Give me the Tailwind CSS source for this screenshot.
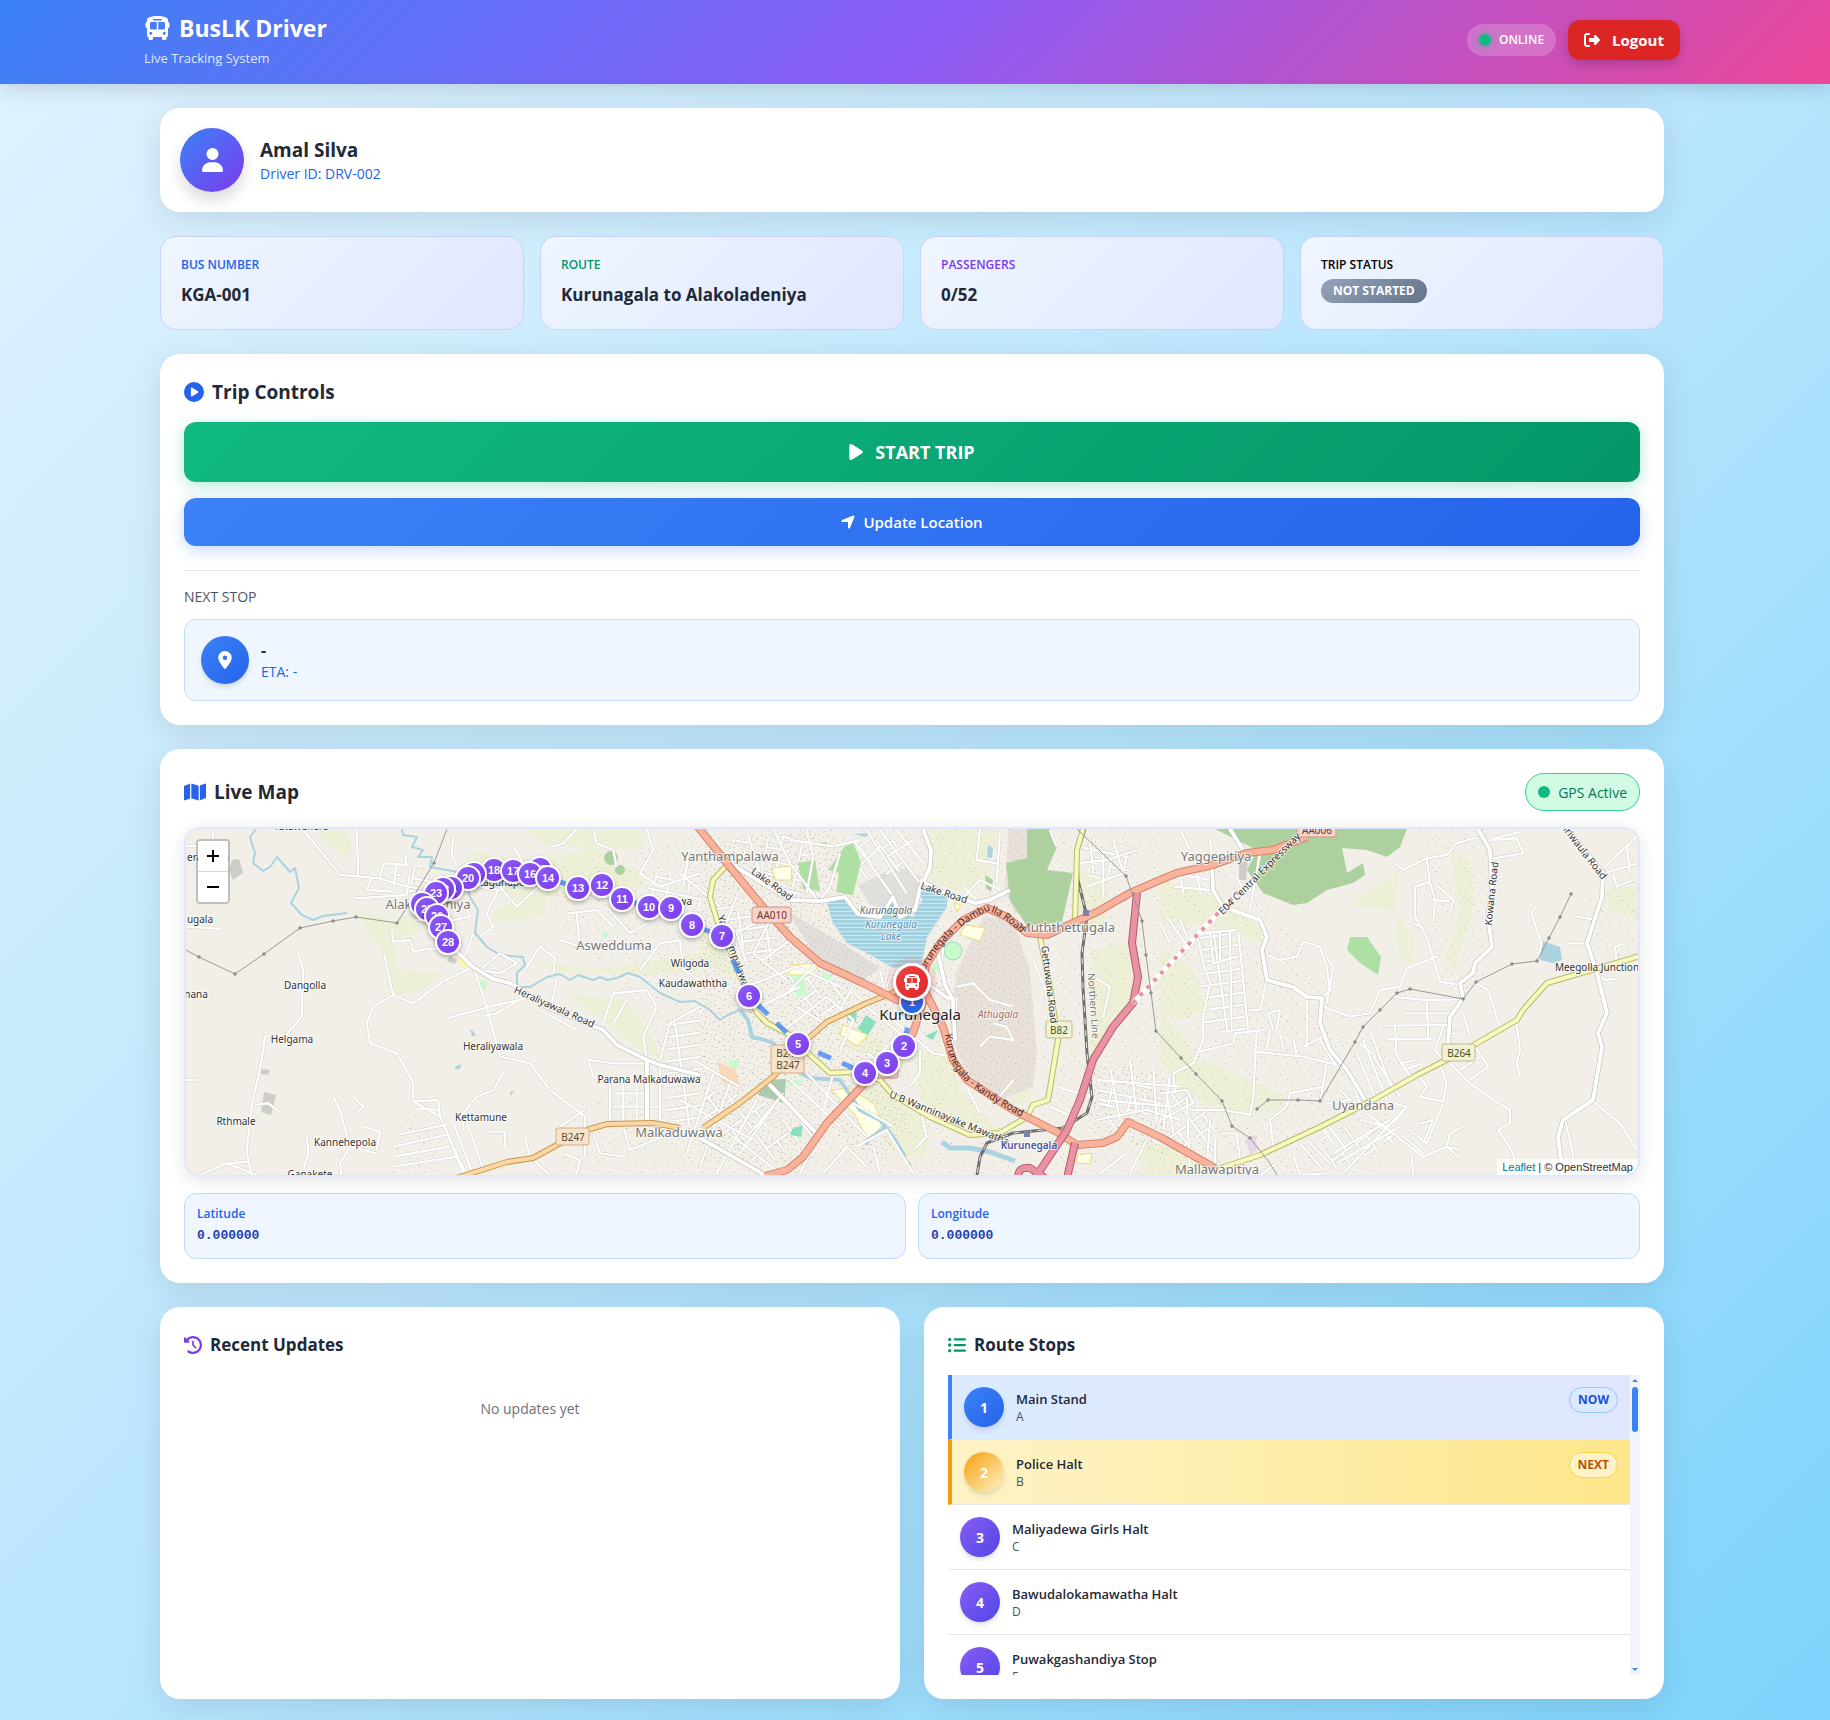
<!DOCTYPE html>
<html lang="en">
<head>
<meta charset="utf-8">
<meta name="viewport" content="width=device-width, initial-scale=1">
<title>BusLK Driver</title>
<script src="https://cdn.jsdelivr.net/npm/@tailwindcss/browser@4"></script>
</head>
<body class="min-h-screen bg-[linear-gradient(135deg,#e0f2fe_0%,#bae6fd_50%,#7dd3fc_100%)] font-['Open_Sans','Noto_Sans',sans-serif] text-[#1f2937]">

<svg width="0" height="0" class="absolute" aria-hidden="true">
  <symbol id="i-bus" viewBox="0 0 576 512"><path fill="currentColor" d="M288 0C422.4 0 512 35.2 512 80V96l0 32c17.700 0 32 14.300 32 32v64c0 17.700-14.300 32-32 32l0 160c0 17.700-14.300 32-32 32v32c0 17.700-14.300 32-32 32H416c-17.700 0-32-14.300-32-32V448H192v32c0 17.700-14.300 32-32 32H128c-17.700 0-32-14.300-32-32l0-32c-17.700 0-32-14.300-32-32l0-160c-17.700 0-32-14.300-32-32V160c0-17.700 14.300-32 32-32h0V96h0V80C64 35.200 153.600 0 288 0zM128 160v96c0 17.700 14.300 32 32 32H272V128H160c-17.700 0-32 14.300-32 32zM304 288H416c17.700 0 32-14.300 32-32V160c0-17.700-14.300-32-32-32H304V288zM144 400a32 32 0 1 0 0-64 32 32 0 1 0 0 64zm288 0a32 32 0 1 0 0-64 32 32 0 1 0 0 64zM384 80c0-8.800-7.200-16-16-16H208c-8.800 0-16 7.200-16 16s7.200 16 16 16H368c8.800 0 16-7.200 16-16z"/></symbol>
</svg>

<header class="bg-[linear-gradient(135deg,#3b82f6_0%,#8b5cf6_50%,#ec4899_100%)] pt-3 pr-1.5 pb-4 shadow-[0_4px_20px_rgba(0,0,0,0.15)]">
  <div class="mx-auto flex max-w-[1536px] items-center justify-between text-white">
    <div>
      <h1 class="flex h-8 items-center gap-2 text-[23px] font-bold leading-8">
        <svg class="h-6 w-[27px]" aria-hidden="true"><use href="#i-bus"/></svg>
        <span>BusLK Driver</span>
      </h1>
      <p class="mt-1 text-[13px] leading-5 text-blue-100">Live Tracking System</p>
    </div>
    <div class="flex items-center gap-3">
      <div class="flex h-8 items-center gap-2 rounded-full bg-white/20 px-3 text-[12px] font-semibold">
        <span class="size-3 rounded-full bg-[#10b981] shadow-[0_0_8px_rgba(16,185,129,0.6)]"></span>
        <span>ONLINE</span>
      </div>
      <button type="button" class="flex h-10 items-center gap-3 rounded-xl bg-[#dc2626] px-4 text-[15px] font-bold shadow-[0_4px_12px_rgba(0,0,0,0.2)]">
        <svg class="size-4" viewBox="0 0 512 512" fill="currentColor" aria-hidden="true"><path d="M377.900 105.900L500.700 228.700c7.200 7.200 11.300 17.100 11.300 27.300s-4.100 20.100-11.300 27.300L377.900 406.100c-6.400 6.400-15 9.900-24 9.900c-18.700 0-33.900-15.200-33.900-33.900l0-62.100-128 0c-17.700 0-32-14.300-32-32l0-64c0-17.700 14.300-32 32-32l128 0 0-62.100c0-18.700 15.200-33.900 33.900-33.900c9 0 17.600 3.600 24 9.900zM160 96L96 96c-17.700 0-32 14.300-32 32l0 256c0 17.700 14.300 32 32 32l64 0c17.700 0 32 14.300 32 32s-14.300 32-32 32l-64 0c-53 0-96-43-96-96L0 128C0 75 43 32 96 32l64 0c17.700 0 32 14.300 32 32s-14.300 32-32 32z"/></svg>
        <span>Logout</span>
      </button>
    </div>
  </div>
</header>

<div class="pr-1.5">
<main class="mx-auto flex max-w-[1536px] flex-col gap-6 px-4 pt-6 pb-5">

  <section class="flex items-center gap-4 rounded-[20px] bg-white p-5 shadow-[0_8px_32px_rgba(0,0,0,0.1)]">
    <div class="flex size-16 items-center justify-center rounded-full bg-[linear-gradient(135deg,#3b82f6,#7c3aed)] text-white shadow-[0_8px_16px_rgba(0,0,0,0.15)]">
      <svg class="h-6 w-[21px]" viewBox="0 0 448 512" fill="currentColor" aria-hidden="true"><path d="M224 256A128 128 0 1 0 224 0a128 128 0 1 0 0 256zm-45.700 48C79.800 304 0 383.800 0 482.300C0 498.700 13.300 512 29.700 512H418.300c16.400 0 29.700-13.300 29.700-29.700C448 383.800 368.200 304 269.700 304H178.300z"/></svg>
    </div>
    <div>
      <h2 class="text-[19px] font-bold leading-7">Amal Silva</h2>
      <p class="text-[14px] font-medium leading-5 text-[#2563eb]">Driver ID: DRV-002</p>
    </div>
  </section>

  <section class="grid grid-cols-4 gap-4">
    <div class="rounded-2xl border border-[#c7d2fe] bg-[linear-gradient(135deg,#eff6ff,#e0e7ff)] p-5">
      <p class="text-[12px] font-semibold leading-4 text-[#2563eb]">BUS NUMBER</p>
      <p class="mt-2 text-[17px] font-bold leading-7">KGA-001</p>
    </div>
    <div class="rounded-2xl border border-[#c7d2fe] bg-[linear-gradient(135deg,#eff6ff,#e0e7ff)] p-5">
      <p class="text-[12px] font-semibold leading-4 text-[#059669]">ROUTE</p>
      <p class="mt-2 text-[17px] font-bold leading-7">Kurunagala to Alakoladeniya</p>
    </div>
    <div class="rounded-2xl border border-[#c7d2fe] bg-[linear-gradient(135deg,#eff6ff,#e0e7ff)] p-5">
      <p class="text-[12px] font-semibold leading-4 text-[#7c3aed]">PASSENGERS</p>
      <p class="mt-2 text-[17px] font-bold leading-7">0/52</p>
    </div>
    <div class="rounded-2xl border border-[#c7d2fe] bg-[linear-gradient(135deg,#eff6ff,#e0e7ff)] p-5">
      <p class="text-[12px] font-semibold leading-4 text-black">TRIP STATUS</p>
      <p class="mt-1.5 flex"><span class="h-6 rounded-full bg-[linear-gradient(135deg,#94a3b8,#64748b)] px-3 text-[12px] font-bold leading-6 text-white">NOT STARTED</span></p>
    </div>
  </section>

  <section class="rounded-[20px] bg-white p-6 shadow-[0_8px_32px_rgba(0,0,0,0.1)]">
    <h2 class="mb-4 flex h-7 items-center gap-2 text-[19px] font-bold">
      <svg class="size-5 text-[#2563eb]" viewBox="0 0 512 512" fill="currentColor" aria-hidden="true"><path d="M0 256a256 256 0 1 1 512 0A256 256 0 1 1 0 256zM188.300 147.100c-7.600 4.200-12.300 12.300-12.300 20.900V344c0 8.700 4.700 16.700 12.300 20.900s16.800 4.100 24.300-.5l144-88c7.100-4.400 11.500-12.100 11.500-20.500s-4.400-16.100-11.500-20.500l-144-88c-7.400-4.500-16.700-4.700-24.300-.5z"/></svg>
      <span>Trip Controls</span>
    </h2>
    <div class="flex flex-col gap-4">
      <button type="button" class="flex h-[60px] w-full items-center justify-center gap-3 rounded-xl bg-[linear-gradient(135deg,#10b981,#059669)] text-[18px] font-bold text-white shadow-[0_4px_16px_rgba(16,185,129,0.3)]">
        <svg class="h-[18px] w-[14px]" viewBox="0 0 384 512" fill="currentColor" aria-hidden="true"><path d="M73 39c-14.800-9.100-33.400-9.400-48.500-.9S0 62.600 0 80V432c0 17.400 9.400 33.400 24.500 41.900s33.700 8.100 48.500-.9L361 297c14.300-8.700 23-24.200 23-41s-8.700-32.200-23-41L73 39z"/></svg>
        <span>START TRIP</span>
      </button>
      <button type="button" class="flex h-12 w-full items-center justify-center gap-2 rounded-xl bg-[linear-gradient(135deg,#3b82f6,#2563eb)] text-[15px] font-semibold text-white shadow-[0_4px_16px_rgba(59,130,246,0.3)]">
        <svg class="h-4 w-[14px]" viewBox="0 0 448 512" fill="currentColor" aria-hidden="true"><path d="M429.600 92.100c4.900-11.900 2.100-25.600-7-34.700s-22.800-11.900-34.700-7l-352 144c-14.200 5.800-22.200 20.800-19.300 35.800s16.100 25.800 31.400 25.800H224V432c0 15.300 10.800 28.400 25.800 31.400s30-5.100 35.800-19.300l144-352z"/></svg>
        <span>Update Location</span>
      </button>
    </div>
    <div class="mt-6 border-t border-gray-200 pt-4">
      <h3 class="text-[14px] font-medium leading-5 text-[#4b5563]">NEXT STOP</h3>
      <div class="mt-3 flex items-center gap-3 rounded-xl border border-[#bfdbfe] bg-[#eff6ff] p-4">
        <div class="flex size-12 items-center justify-center rounded-full bg-[linear-gradient(135deg,#3b82f6,#2563eb)] text-white shadow-md">
          <svg class="h-[18px] w-[14px]" viewBox="0 0 384 512" fill="currentColor" aria-hidden="true"><path d="M215.700 499.200C267 435 384 279.400 384 192C384 86 298 0 192 0S0 86 0 192c0 87.400 117 243 168.300 307.200c12.300 15.300 35.100 15.300 47.400 0zM192 128a64 64 0 1 1 0 128 64 64 0 1 1 0-128z"/></svg>
        </div>
        <div>
          <p class="text-[16px] font-bold leading-6">-</p>
          <p class="text-[14px] font-medium leading-5 text-[#2563eb]">ETA: -</p>
        </div>
      </div>
    </div>
  </section>

  <section class="rounded-[20px] bg-white p-6 shadow-[0_8px_32px_rgba(0,0,0,0.1)]">
    <div class="mb-4 flex items-center justify-between">
      <h2 class="flex items-center gap-2 text-[19px] font-bold leading-7">
        <svg class="h-5 w-[22px] text-[#2563eb]" viewBox="0 0 576 512" fill="currentColor" aria-hidden="true"><path d="M384 476.100L192 421.200V35.900L384 90.800V476.100zm32-1.200V88.400L543.100 37.500c15.800-6.300 32.900 5.300 32.900 22.300V394.600c0 9.800-6 18.600-15.100 22.300L416 474.800zM15.100 95.100L160 37.200V423.600L32.900 474.500C17.100 480.800 0 469.200 0 452.200V117.400c0-9.800 6-18.600 15.100-22.300z"/></svg>
        <span>Live Map</span>
      </h2>
      <div class="flex h-[38px] items-center gap-2 rounded-full border border-[#34d399] bg-[#d1fae5] px-3 text-[14px] font-medium text-[#047857]">
        <span class="size-3 rounded-full bg-[#10b981]"></span>
        <span>GPS Active</span>
      </div>
    </div>

    <div class="relative h-[350px] overflow-hidden rounded-2xl border-2 border-[#e0e7ff] bg-[#f2efe9] shadow-[0_4px_20px_rgba(0,0,0,0.1)]">
      <svg class="block size-full" viewBox="186 829 1452 346" preserveAspectRatio="xMidYMid slice" role="img" aria-label="Route map of Kurunegala">
        <defs>
          <pattern id="houses" width="31" height="29" patternUnits="userSpaceOnUse" fill="#d9cfc7">
            <path d="M2 3h1v1h-1zM9 1h2v1h-2zM16 5h1v2h-1zM24 2h1v1h-1zM28 8h1v1h-1zM5 11h1v1h-1zM12 13h1v1h-1zM20 12h2v1h-2zM3 19h1v1h-1zM9 22h1v1h-1zM16 19h1v1h-1zM25 17h1v2h-1zM29 24h1v1h-1zM21 25h1v1h-1zM6 26h2v1h-2zM13 27h1v1h-1z"/>
          </pattern>
          <pattern id="houses2" width="19" height="17" patternUnits="userSpaceOnUse" fill="#d3c7be">
            <path d="M1 2h2v1h-2zM6 4h1v1h-1zM11 1h1v2h-1zM15 5h2v1h-2zM3 8h1v1h-1zM8 9h2v1h-2zM13 10h1v1h-1zM17 12h1v1h-1zM2 13h2v1h-2zM7 15h1v1h-1zM12 14h1v1h-1z"/>
          </pattern>
          <pattern id="streetsA" width="34" height="26" patternUnits="userSpaceOnUse" patternTransform="rotate(12)">
            <path d="M0 6H34M8 6V26M22 0V19M8 19H30" fill="none" stroke="#cfcbc6" stroke-width="3"/>
            <path d="M0 6H34M8 6V26M22 0V19M8 19H30" fill="none" stroke="#fff" stroke-width="2"/>
          </pattern>
          <pattern id="streetsB" width="30" height="38" patternUnits="userSpaceOnUse" patternTransform="rotate(-36)">
            <path d="M5 0V38M5 12H30M18 12V33M0 27H18" fill="none" stroke="#cfcbc6" stroke-width="3"/>
            <path d="M5 0V38M5 12H30M18 12V33M0 27H18" fill="none" stroke="#fff" stroke-width="2"/>
          </pattern>
          <pattern id="streetsC" width="26" height="12" patternUnits="userSpaceOnUse" patternTransform="rotate(-8)">
            <path d="M0 4H26M6 0V12" fill="none" stroke="#cfcbc6" stroke-width="3"/>
            <path d="M0 4H26M6 0V12" fill="none" stroke="#fff" stroke-width="2"/>
          </pattern>
          <pattern id="lake" width="6" height="4" patternUnits="userSpaceOnUse"><path d="M0 0H6V4H0z" fill="#d8e3e4"/><path d="M0 0H6V3H0z" fill="#a5d1df"/></pattern>
          <linearGradient id="gv" x1="0" y1="0" x2="1" y2="1"><stop stop-color="#8b5cf6"/><stop offset="1" stop-color="#7c3aed"/></linearGradient>
          <linearGradient id="gr" x1="0" y1="0" x2="1" y2="1"><stop stop-color="#ef4444"/><stop offset="1" stop-color="#dc2626"/></linearGradient>
          <filter id="drop" x="-50%" y="-50%" width="200%" height="200%"><feDropShadow dx="0" dy="2" stdDeviation="2" flood-opacity="0.3"/></filter>

          <g id="minor">
            <g transform="translate(180 740) scale(.3333)">
              <path d="M355 640L370 690 365 830 320 885 255 890 245 960 215 1100 200 1230 215 1310M18 560L125 567M18 1020H50M225 1095L265 1090 300 1118M100 268V300M18 318H60"/>
              <path d="M700 790L780 730 880 680M700 790L640 765 580 800 560 850 570 910 650 940 700 1030 700 1085 780 1130 820 1220 860 1305M640 765L620 680 612 640M880 680L920 800 960 950 1050 970 1110 1050 1215 1130 1215 1245M800 835L930 800 1060 770M905 830L950 820 1010 785M880 580L850 660M975 990L940 1050 890 1070 850 1120 850 1170M1215 1110L1140 1160"/>
              <path d="M370 270L480 405 600 415 680 440 720 445M530 268L535 410M525 475L680 465M600 415L610 370 680 375M640 440L650 375M680 375L675 340M680 465L690 400M575 410L560 450 640 455M820 290L815 340 830 380M1000 320L1030 370 1090 350M1120 320L1150 310 1190 268M1240 268L1250 310 1300 330 1310 380M1400 268L1420 330 1380 400 1440 440 1560 400"/>
              <path d="M635 572L640 605 690 600 700 635 750 625 800 630M850 480L870 530 800 545 700 540M900 440L955 450 920 520 940 560 900 590M960 440L1010 500 1120 400"/>
              <path d="M460 1070L480 1110 510 1220 480 1270 485 1305M380 1190L385 1240 370 1290M520 1070L550 1100 530 1120M60 1305L140 1270 230 1305M140 1270L210 1265M550 1160L600 1175 590 1230M510 1220L590 1240M700 1085L775 1080 780 1130M710 1105L780 1110M650 1185L800 1155M640 1220L800 1185M640 1250L810 1220M640 1280L830 1250M820 1150L880 1305M860 1145L910 1290M790 1150L850 1300"/>
              <path d="M900 690L960 640 1010 670 960 700ZM1035 690L1080 620 1125 655 1120 700M1130 720L1115 790M1080 810L1190 870M1225 960L1300 970 1405 970M1225 960L1240 1010 1290 1030 1290 1140M1330 1030V1145M1370 1030V1145M1300 1060H1400M1300 1100H1440M1440 980V1140M925 1175H975V1220M1035 1190L1050 1250 1110 1305M1150 1240L1200 1260 1190 1305M1240 1180L1260 1240 1330 1250M1330 1160L1350 1230 1450 1190"/>
              <path d="M1160 520L1250 510 1300 560M1190 520L1200 620 1140 600M1280 500L1350 580 1420 540M1310 580L1290 640M1270 850L1300 760 1400 750 1430 800 1390 890 1400 960M1340 780L1300 850M1380 690L1440 610 1500 600 1510 690 1560 720M1560 800L1470 850 1440 960"/>
            </g>
            <g transform="translate(680 820) scale(.3333)">
              <path d="M200 30L240 160M280 27L330 130 420 250M380 30L400 110 380 220M330 60L460 80 540 60M420 240L450 200 480 100M520 60L640 230M560 30L680 220M600 30L720 190M650 30L730 130M700 60L620 110M600 80L560 120M900 30L890 120 950 130M960 40L950 190M840 240L900 180 960 210M850 200L900 250M1110 30L1130 80M1190 130L1280 120 1370 90M1230 60L1240 160M1300 60L1330 160 1220 200M1270 100V230"/>
              <path d="M0 160L120 260M30 80L10 200M170 230L130 330M240 300L170 340 200 430M330 360L250 420M280 280L220 400 320 480M410 430L320 520M200 500L350 440 480 500M240 560L360 500M300 640L440 530M350 560L450 620M440 530L520 600 480 690M530 480L480 570M600 450L620 540M640 450L620 500M560 560L660 640 600 700M650 590L700 560M640 600L760 700 820 710M770 480L830 540 810 720M790 380L780 480M830 500L880 490 930 540 1000 560M900 680L930 650 1000 660 980 620 940 610M720 690V760L690 800"/>
              <path d="M40 720L180 800M0 840L220 960M100 760L20 1000M150 790L60 1040M230 840L110 1060M280 860L180 1000M310 820L210 940M330 780L480 920M380 760L560 950M460 760L430 870M300 1060L160 950M360 900L420 980M520 850L640 920M530 980L620 930 700 1060M720 860L740 950 700 990M560 700L660 760M860 800L900 880M950 840L1000 780M400 980L360 1060M430 1060L500 980 560 1040M600 1060L580 980"/>
              <path d="M1130 800L1230 830M1110 860L1200 900M1250 780L1500 800M1260 840L1480 860M1290 740L1320 900M1350 720L1370 880M1420 740L1430 900M1470 760L1450 930M1250 900L1400 870 1500 900M1290 900L1320 950M1340 1000L1260 1060M1400 960L1350 1060M1240 470L1290 500 1270 590M1060 420L1100 520"/>
            </g>
            <g transform="translate(1160 750) scale(.3333)">
              <path d="M60 237L90 300M150 270L160 345M40 370L150 390M40 410L150 420M60 370L70 430M110 360L120 430M0 520L30 580M20 500L90 600M60 510L80 560M300 310L270 480M230 380L260 440M110 550L230 540M150 550L160 640 230 620M180 540V630M210 540L215 850M235 545L265 850M110 550L130 640 150 700 130 800 130 870 100 940 40 970 45 1030M120 905L220 880 225 850 310 840M320 690L300 780 270 780M320 615L360 630 410 620 430 575 480 590 500 650 510 720 490 740M500 625L520 650 500 760"/>
              <path d="M490 770L570 800 630 790 660 720 720 710 740 655 830 620M705 340L730 360 800 325 860 315 890 280 950 262M800 325L810 395 765 410V500L800 560 840 695 900 705M810 395L825 450 820 510M830 405L880 450 870 490M820 450L870 455M760 520L790 535M995 270L1070 265 1090 310 1000 325M1000 265L1085 245M1330 370L1435 340M1335 350L1430 260M1360 370L1370 410 1420 390M1400 280L1410 370"/>
              <path d="M700 740L790 750 910 748M730 790H870M670 827L870 825M680 867H815M705 827L710 915M800 750L805 865M870 850H905M850 830L825 900 850 930M710 915L750 980 790 960M720 940L770 930M730 960L790 940M590 910L650 1050M610 870L680 1050M630 840L700 1030M640 920L720 1040M600 880L650 920M775 975L800 1010 780 1040 850 1055 860 1000 840 940M870 940L930 1000 1000 1050 1050 1080 1050 1120 1015 1140 1060 1210 1070 1275M930 990L985 950 945 890M900 960L960 920M930 860L910 790M950 700L985 720 1020 830M1130 465L1115 490 1145 580 1130 640M1070 820L1080 900 1070 940 1080 980"/>
              <path d="M1225 580H1280M1370 635L1365 590 1395 580M1250 500L1310 510M1305 670L1335 690 1375 685M1300 1055L1380 1120 1430 1200M1215 1110L1230 1170 1250 1275M340 840L325 790 360 780 350 840M330 840L320 900M360 850L370 900M400 860L410 920M280 905L430 920 530 945M440 740V900M430 890L490 860M0 1030L80 1020 100 1060 0 1110M20 1030L40 1150M80 1040L90 1275M100 1080L190 1080 270 1095 280 1040 290 840M150 1110L140 1260M165 1170V1270M180 1150L230 1150 240 1230M300 1275L350 1240M380 1070L390 1030 490 1010M340 1190L330 1110 380 1070M480 870L530 950M500 940L480 1060"/>
              <path d="M540 1020L570 1050 500 1060M570 980L600 1060M480 1130L520 1180M500 1120L560 1200M440 1170L510 1240M420 1180L490 1260M520 1210L690 1110M530 1240L720 1130M550 1270L740 1070M600 1110L680 1130M620 1090L790 1220 860 1190 900 1200M700 1060L740 1070 700 1120M730 1160L790 1210M750 1140L800 1180 850 1060M760 1275L755 1220M910 1130L870 1150 860 1190 900 1225M780 1120L820 1110 790 1180M400 1215L420 1275 500 1270"/>
            </g>
          </g>
          <g id="major">
            <path d="M447 942L473 967 493 979 510 983 547 1007 603 1030 617 1045 647 1060 660 1065 700 1075M647 1060V1122"/>
            <path d="M733 865L790 900 820 901 845 897 858 914 880 917 893 897 900 917 915 910 920 888 930 868 931 850 923 829M920 880L940 891 975 903 990 900 1010 890"/>
            <path d="M768 1083L820 1137M700 1138L765 1175M935 940L945 985 953 1000 955 1040M930 985L950 1000"/>
            <path d="M1478 829L1490 850 1492 890 1488 917 1492 947 1475 963 1473 973 1460 983 1463 998 1450 1017 1448 1045M1567 829L1603 873 1602 897 1587 943 1597 973 1607 1013 1598 1033 1602 1047 1593 1100 1563 1120 1558 1137 1563 1175"/>
            <path d="M1212 865L1213 890 1223 907 1260 920 1267 937 1262 950 1267 980 1293 987 1307 997 1322 998 1320 1023 1330 1050 1347 1070 1365 1100M1230 829L1243 850"/>
          </g>
          <path id="primary" d="M698 827L730 867 763 907 790 937 820 963 863 983 897 1000 920 1007M926 993L925 967 940 943 963 920 987 908 1007 917 1027 933 1047 935 1073 923 1097 912 1130 893 1160 880 1177 873 1213 865 1247 853 1273 850 1307 837M926 993L913 1033 897 1057 863 1085 827 1123 803 1157 787 1170 765 1176M926 993L943 1027 953 1060 967 1080 1013 1110 1057 1132 1077 1145 1103 1143 1117 1137 1128 1122 1160 1137 1215 1168"/>
          <path id="orange" d="M450 1180L507 1162 533 1158 557 1145 590 1129 607 1124 653 1123 680 1128M703 1128L740 1103 773 1077 793 1053 810 1037 827 1022 867 1003 905 988"/>
          <path id="yellow" d="M727 865L713 880 710 897 717 920 730 950 743 983 757 1013 767 1023 790 1035 810 1055 830 1073 850 1072 880 1080 893 1095 930 1117 970 1135 1000 1133 1027 1117 1033 1105 1048 1100 1058 1040 1050 987 1040 937M1083 829L1077 850 1075 920M1640 956L1547 983 1523 1010 1517 1020 1460 1053 1417 1075 1373 1100 1320 1127 1260 1155 1215 1170"/>
          <path id="motor" d="M1035 1178L1067 1130 1080 1100 1093 1060 1113 1027 1133 1003 1138 977 1132 943 1137 893M1067 1178L1075 1143M1018 1178Q1018 1166 1030 1168L1045 1178"/>
          <path id="rail" d="M1085 829L1077 853 1078 880 1087 917 1082 953 1083 987 1087 1053 1092 1097 1087 1113 1063 1128 1013 1133 987 1143 980 1157 977 1175"/>
        </defs>

        <rect x="186" y="829" width="1452" height="346" fill="#f2efe9"/>
        <g fill="#edf0d6">
          <path d="M315 829H345L353 850 345 857 325 842ZM352 910L393 920 413 913 425 930 393 940 397 970 443 973 420 992 392 995 380 947ZM470 850L500 857 540 860 593 847 623 867 650 873 643 887 547 897 543 917 493 923 493 910 513 903 480 873ZM525 829H648L640 850 595 847 545 845ZM537 960L593 970 700 953V972L647 975 553 972ZM563 993L623 1000 647 1027 665 1063 640 1050 607 1023Z"/>
          <path d="M930 829H1000L985 880 960 893 930 880ZM1075 870L1110 880 1105 930 1070 920ZM1090 950L1140 940 1135 990 1110 1040 1090 1060ZM860 1085L890 1090 930 1125 925 1160 890 1150ZM915 1050L950 1055 960 1090 1000 1130 960 1130 920 1100ZM700 930L725 945 745 985 700 960ZM1160 880L1213 895 1260 925 1262 945 1220 925 1160 925ZM1160 950L1195 970 1205 1010 1180 1020 1160 1010ZM1160 1010L1200 1060 1250 1080 1285 1095 1280 1110 1230 1115 1180 1090 1160 1060ZM1370 890L1400 870 1395 910 1415 940 1413 965 1400 960 1395 910 1345 905ZM1450 850L1470 860 1475 900 1455 970 1445 960 1460 910ZM1605 890L1638 885V920L1610 910Z"/>
          <path d="M1140 1140L1180 1150 1220 1175H1140ZM1000 1060L1030 1070 1030 1100 1000 1110ZM830 1020L880 1040 890 1060 850 1050Z"/>
        </g>
        <path d="M858 885L885 872 905 868 925 880 945 890 920 888 915 908 900 912 870 905ZM788 912L840 942 880 968 860 982 815 955Z" fill="#e1dfdc"/>
        <path d="M535 870L640 850 700 830V1175H560L570 1100 660 1100 640 1010 580 960ZM700 829H1010V1175H700ZM1040 829H1160V1175H1040ZM1160 870L1240 860 1300 950 1400 1060 1380 1175H1160ZM400 1110H440V1175H390ZM500 950L525 960 515 975 495 968ZM590 1150H700V1175H590ZM1420 829H1490V990H1440L1420 900ZM1590 900L1638 880V960H1590Z" fill="url(#houses)"/>
        <path d="M700 840L830 829 900 990 870 1080 800 1170 700 1160ZM1080 1060L1160 1070 1180 1160 1090 1130ZM870 1060L910 1120 880 1170 830 1130Z" fill="url(#houses2)"/>
        <path d="M667 1020L700 1010V1125L667 1120ZM1200 930L1240 935 1245 1035 1205 1030ZM710 900L760 920 790 960 750 960Z" fill="url(#streetsC)"/>
        <path d="M705 1090L765 1100 800 1140 760 1165 705 1125ZM830 840L900 840 905 870 860 880ZM1170 1090L1210 1100 1215 1160 1165 1140ZM795 960L850 985 860 1000 810 1020 775 990ZM1320 1130L1390 1120 1400 1140 1330 1170Z" fill="url(#streetsB)"/>
        <path d="M640 870L700 880 700 910 650 900ZM730 840L800 835 820 890 790 895ZM1095 1080L1150 1075 1170 1130 1100 1110ZM390 875L420 865 440 885 420 900ZM1080 840L1130 845 1130 870 1090 880Z" fill="url(#streetsA)"/>
        <path d="M983 917L1013 920 1030 970 1037 1053 1033 1087 1000 1100 970 1077 957 1053 950 1020 957 970ZM1008 829H1027V860L1033 905 1015 915 1005 890Z" fill="#e8e1da"/>
        <path d="M983 917L1013 920 1030 970 1037 1053 1033 1087 1000 1100 970 1077 957 1053 950 1020 957 970ZM1008 829H1027V860L1033 905 1015 915 1005 890Z" fill="url(#houses2)"/>
        <g fill="#add19e">
          <path d="M1027 829H1050L1057 847 1047 870 1073 873 1062 922 1027 926 1010 900 1006 863 1027 858ZM1215 829H1407L1400 847 1387 857 1367 850 1342 848 1347 873 1363 863 1365 875 1353 883 1327 890 1307 903 1293 905 1263 893 1247 870 1257 850Z"/>
          <circle cx="611" cy="858" r="7"/><circle cx="620" cy="870" r="5"/><path d="M985 875L993 880 991 892 986 888Z"/>
        </g>
        <g fill="#aedfa3">
          <path d="M798 863L815 860 820 891 803 889ZM844 847L853 843 861 862 853 895 836 892 839 873 828 870ZM1350 937L1367 937 1381 957 1378 975 1360 963 1347 950Z"/>
          <path d="M907 1160L912 1165 908 1168ZM820 843L827 842 826 848Z"/>
        </g>
        <g fill="#c8facc"><circle cx="953" cy="951" r="9" stroke="#8fdfb2" stroke-width="1"/><path d="M604 931L609 934 606 939 601 934ZM480 980L487 982 486 991 481 989ZM730 1060H738V1068H728ZM932 965L940 960 938 972 933 975ZM795 973L806 971 804 985 808 995 797 997 793 985ZM823 970L834 978 822 982ZM787 1081L802 1079 800 1086 788 1085Z"/></g>
        <g fill="#88e0be"><path d="M866 1015L876 1022 867 1037 858 1028ZM848 1013L857 1012 856 1022 847 1020ZM792 1129L803 1125 801 1137 790 1135ZM925 1036L938 1030 933 1040Z"/></g>
        <path d="M765 1080L786 1079 784 1103 758 1095Z" fill="#aacbaf"/>
        <g fill="#ffffe5" stroke="#e9dc7c" stroke-width="1"><path d="M772 868L792 866 791 880 775 880ZM790 965L820 963 812 975 788 975ZM843 1025L868 1035 857 1046 840 1035ZM832 1090L850 1088 875 1105 883 1125 868 1140 855 1115ZM1078 1155L1092 1153 1090 1164 1076 1163ZM965 925L985 928 980 941 960 935ZM954 903L961 905 957 912Z"/></g>
        <path d="M717 1061L735 1070 742 1089 722 1082Z" fill="#f7d9b9"/>
        <g fill="#cfcdca"><path d="M232 860L239 859 243 873 233 880 229 870ZM264 1092L276 1095 271 1115 261 1112ZM261 1069L270 1070 268 1075 261 1074ZM450 956L458 960 454 964 447 961ZM1239 863L1248 860 1246 880H1239Z"/></g>
        <path d="M458 957L469 965 466 968 458 962Z" fill="#fbf6a2"/>
        <path d="M1245 1140L1255 1134 1258 1150 1250 1155Z" fill="#e6d8e6"/>

        <path d="M827 903L847 898 862 915 880 917 893 897 897 913 913 917 922 900 920 888 948 892 947 907 927 937 921 967 893 968 867 953 847 943 833 923Z" fill="url(#lake)"/>
        <g fill="#aad3df"><path d="M1540 940L1560 947 1562 960 1553 963 1540 960ZM455 1067L461 1064 460 1069 455 1069ZM470 1029L473 1031 476 1036 472 1036ZM510 1092L514 1091 511 1096ZM853 834L870 833 865 837ZM988 845L993 848 992 858 987 857Z"/></g>
        <g fill="none" stroke="#aad3df" stroke-width="2" stroke-linejoin="round">
          <path d="M256 829L250 837 255 853 253 863 263 871 270 867 277 857 290 872 295 868 299 888 291 903 302 915 313 920 323 916 347 913M402 829L403 835 417 837 412 847 423 850 418 857 432 857 430 867 447 870 463 873 470 897 478 910 475 933 487 947 500 955 523 957 525 965 517 973 517 987 530 987 547 977 560 974 570 980 578 975 593 980 600 977 607 980 617 978 628 973 640 977 660 993 680 1002 695 1001 710 1010 720 1020 728 1015 740 1010"/>
          <path d="M740 1010L748 1020 752 1037 765 1040 773 1043 778 1050 795 1070 810 1078 840 1080 860 1110 880 1120 895 1140 905 1157M885 1128L868 1140 866 1145" stroke-width="4"/>
          <path d="M942 1142L950 1148 970 1148 990 1152 1015 1161" stroke-width="5"/>
        </g>

        <use href="#minor" fill="none" stroke="#cac6c1" stroke-width="9"/>
        <use href="#minor" fill="none" stroke="#fff" stroke-width="7"/>
        <use href="#major" fill="none" stroke="#b9b5b0" stroke-width="5" stroke-linejoin="round"/>
        <use href="#major" fill="none" stroke="#fff" stroke-width="4" stroke-linejoin="round"/>
        <use href="#rail" fill="none" stroke="#6f6f6f" stroke-width="3"/>
        <use href="#rail" fill="none" stroke="#e8e8e8" stroke-width="1" stroke-dasharray="6 6"/>
        <use href="#yellow" fill="none" stroke="#b9b86a" stroke-width="6" stroke-linejoin="round"/>
        <use href="#yellow" fill="none" stroke="#f7fabf" stroke-width="4" stroke-linejoin="round"/>
        <use href="#orange" fill="none" stroke="#c79a4d" stroke-width="6" stroke-linejoin="round"/>
        <use href="#orange" fill="none" stroke="#fcd6a4" stroke-width="4" stroke-linejoin="round"/>
        <use href="#primary" fill="none" stroke="#d9836a" stroke-width="8" stroke-linejoin="round"/>
        <use href="#primary" fill="none" stroke="#f9b29c" stroke-width="6" stroke-linejoin="round"/>
        <use href="#motor" fill="none" stroke="#b85a70" stroke-width="8" stroke-linejoin="round"/>
        <use href="#motor" fill="none" stroke="#e892a2" stroke-width="6" stroke-linejoin="round"/>
        <path d="M1133 1003L1220 911 1238 892" stroke="#fff" stroke-width="5" fill="none"/>
        <path d="M1133 1003L1220 911 1238 892" stroke="#e892a2" stroke-width="4" stroke-dasharray="4 6" fill="none"/>
        <g fill="none" stroke="#9b9996" stroke-width="1">
          <path d="M186 950L199 957 235 974 264 954 300 928 333 921 356 917 397 923 434 863 447 829M1077 829L1126 876 1142 921 1146 955 1151 993 1156 1031 1181 1058 1196 1074 1222 1101 1232 1126 1250 1138 1269 1162 1277 1175M1257 1109L1268 1100 1298 1100 1320 1101 1355 1042 1363 1027 1380 1010 1397 993 1410 989 1463 999 1476 982 1512 964 1537 961 1549 938 1560 917 1571 894"/>
        </g>
        <path d="M198 956h2v2h-2zM234 973h2v2h-2zM263 953h2v2h-2zM299 927h2v2h-2zM332 920h2v2h-2zM355 916h2v2h-2zM396 922h2v2h-2zM433 862h2v2h-2zM1125 875h2v2h-2zM1141 920h2v2h-2zM1145 954h2v2h-2zM1150 992h2v2h-2zM1155 1030h2v2h-2zM1180 1057h2v2h-2zM1195 1073h2v2h-2zM1221 1100h2v2h-2zM1231 1125h2v2h-2zM1249 1137h2v2h-2zM1256 1108h2v2h-2zM1267 1099h2v2h-2zM1297 1099h2v2h-2zM1319 1100h2v2h-2zM1354 1041h2v2h-2zM1362 1026h2v2h-2zM1379 1009h2v2h-2zM1396 992h2v2h-2zM1409 988h2v2h-2zM1462 998h2v2h-2zM1475 981h2v2h-2zM1511 963h2v2h-2zM1536 960h2v2h-2zM1548 937h2v2h-2zM1559 916h2v2h-2zM1570 893h2v2h-2z" fill="#ddd" stroke="#777" stroke-width="1"/>
        <path d="M1083 910h6v6h-6zM1024 1131h6v6h-6z" fill="#7981b0"/>

        <g stroke-width="1">
          <rect x="752" y="907" width="39" height="16" rx="2" fill="#f6d3cb" stroke="#d88f80"/>
          <rect x="1297" y="821" width="39" height="16" rx="2" fill="#f6d3cb" stroke="#d88f80"/>
          <rect x="871" y="1063" width="27" height="15" rx="2" fill="#f6d3cb" stroke="#d88f80"/>
          <rect x="771" y="1045" width="33" height="28" rx="2" fill="#f6e3cb" stroke="#d6ae7a"/>
          <rect x="556" y="1128" width="33" height="17" rx="2" fill="#f6e3cb" stroke="#d6ae7a"/>
          <rect x="1046" y="1021" width="26" height="17" rx="2" fill="#f0f1d5" stroke="#bcbd84"/>
          <rect x="1442" y="1044" width="33" height="17" rx="2" fill="#f0f1d5" stroke="#bcbd84"/>
        </g>
        <g font-family="Noto Sans, sans-serif" font-size="10" text-anchor="middle" fill="#5d4a35">
          <text x="772" y="919" fill="#73342a">AA010</text><text x="1317" y="834" fill="#73342a">AA006</text>
          <text x="788" y="1057">B247</text><text x="788" y="1069">B247</text><text x="573" y="1141">B247</text>
          <text x="1059" y="1034" fill="#4f5419">B82</text><text x="1459" y="1057" fill="#4f5419">B264</text>
        </g>

        <g font-family="Noto Sans, sans-serif" text-anchor="middle" paint-order="stroke" stroke="#fff" stroke-opacity="0.7" stroke-width="2" stroke-linejoin="round">
          <g font-size="13" fill="#777">
            <text x="730" y="861">Yanthampalawa</text><text x="1216" y="861">Yaggepitiya</text><text x="1067" y="932">Muththettugala</text>
            <text x="614" y="950">Aswedduma</text><text x="428" y="909">Alakoladeniya</text><text x="679" y="1137">Malkaduwawa</text>
            <text x="1363" y="1110">Uyandana</text><text x="1217" y="1174">Mallawapitiya</text>
          </g>
          <text x="920" y="1020" font-size="15" fill="#222">Kurunegala</text>
          <g font-size="10" fill="#333">
            <text x="305" y="989">Dangolla</text><text x="292" y="1043">Helgama</text><text x="493" y="1050">Heraliyawala</text><text x="236" y="1125">Rthmale</text>
            <text x="481" y="1121">Kettamune</text><text x="345" y="1146">Kannehepola</text><text x="310" y="1178">Ganakete</text><text x="649" y="1083">Parana Malkaduwawa</text>
            <text x="690" y="967">Wilgoda</text><text x="693" y="987">Kaudawaththa</text><text x="1597" y="971">Meegolla Junction</text>
            <text x="200" y="923">ugala</text><text x="196" y="998">hana</text><text x="208" y="861">eragama</text><text x="301" y="830">Yatawehera</text>
            <text x="499" y="886">Wetagdhapola</text><text x="678" y="905">Wewa</text>
            <text transform="translate(553 1010) rotate(24)">Heraliyawala Road</text>
            <text transform="translate(770 887) rotate(36)">Lake Road</text><text transform="translate(943 896) rotate(18)">Lake Road</text>
            <text transform="translate(1262 876) rotate(-45)">E04 Central Expressway</text>
            <text transform="translate(1495 894) rotate(-84)">Kowana Road</text><text transform="translate(1580 852) rotate(52)">Hiriwaula Road</text>
            <text transform="translate(1046 985) rotate(83)">Gettuwana Road</text><text transform="translate(730 952) rotate(70)">Yanthampalawa</text>
            <text transform="translate(948 1121) rotate(22)">U B Wanninayake Mawatha</text>
            <text transform="translate(1090 1006) rotate(86)" fill="#777">Northern Line</text>
          </g>
          <text x="1029" y="1149" font-size="10" font-weight="600" fill="#4a55a5">Kurunegala</text>
          <g font-size="10" font-style="italic"><text x="886" y="914" fill="#5e6d75">Kurunagala</text><text x="891" y="928" fill="#5a8fb5">Kurunegala</text><text x="891" y="940" fill="#5a8fb5">Lake</text><text x="998" y="1018" fill="#a1725c">Athugala</text></g>
        </g>
        <g font-family="Noto Sans, sans-serif" font-size="10" fill="#4a2a22">
          <path id="p-dam" d="M922 976C932 955 952 926 988 911Q1004 916 1024 936" fill="none"/>
          <text><textPath href="#p-dam">Kurunegala - Dambulla Road</textPath></text>
          <path id="p-kan" d="M945 1034C950 1070 956 1082 1024 1118" fill="none"/>
          <text><textPath href="#p-kan">Kurunegala - Kandy Road</textPath></text>
        </g>

        <path d="M912 1002L904 1046 887 1063 865 1073 798 1044 749 996 722 936 692 925 671 908 649 907 622 899 602 885 578 888 548 878 530 874 513 871 494 870 468 878 451 888 436 893 422 904 437 916 448 942" fill="none" stroke="#3b82f6" stroke-opacity="0.75" stroke-width="5" stroke-dasharray="14 12"/>
        <g id="stops" font-family="Liberation Sans, sans-serif" font-size="11" font-weight="700" text-anchor="middle" fill="#fff"></g>
        <circle cx="912" cy="982" r="25" fill="#ef4444" fill-opacity="0.12"/>
        <circle cx="912" cy="982" r="19" fill="#fff" filter="url(#drop)"/>
        <circle cx="912" cy="982" r="16" fill="url(#gr)"/>
        <use href="#i-bus" x="903" y="974" width="18" height="16" color="#fff"/>
      </svg>

      <div class="absolute top-[10px] left-[10px] flex flex-col overflow-hidden rounded border-2 border-black/20 bg-clip-padding">
        <button type="button" aria-label="Zoom in" class="flex h-[31px] w-[30px] items-center justify-center border-b border-gray-300 bg-white"><svg class="size-3" viewBox="0 0 12 12" aria-hidden="true"><path d="M0 6H12M6 0V12" stroke="#000" stroke-width="2"/></svg></button>
        <button type="button" aria-label="Zoom out" class="flex h-[30px] w-[30px] items-center justify-center bg-white"><svg class="size-3" viewBox="0 0 12 12" aria-hidden="true"><path d="M0 6H12" stroke="#000" stroke-width="2"/></svg></button>
      </div>
      <p class="absolute right-0 bottom-0 bg-white/80 px-[5px] font-['Liberation_Sans',sans-serif] text-[11px] leading-4 text-[#333]"><a href="#" class="text-[#0078a8]">Leaflet</a> | © OpenStreetMap</p>
    </div>

    <div class="mt-4 grid grid-cols-2 gap-3">
      <div class="rounded-xl border border-[#bfdbfe] bg-[#eff6ff] p-3">
        <p class="text-[12px] font-semibold leading-4 text-[#2563eb]">Latitude</p>
        <p class="mt-1 font-['Liberation_Mono',monospace] text-[13px] font-bold leading-5 text-[#1e40af]">0.000000</p>
      </div>
      <div class="rounded-xl border border-[#bfdbfe] bg-[#eff6ff] p-3">
        <p class="text-[12px] font-semibold leading-4 text-[#2563eb]">Longitude</p>
        <p class="mt-1 font-['Liberation_Mono',monospace] text-[13px] font-bold leading-5 text-[#1e40af]">0.000000</p>
      </div>
    </div>
  </section>

  <div class="grid grid-cols-2 gap-6">
    <section class="rounded-[20px] bg-white p-6 shadow-[0_8px_32px_rgba(0,0,0,0.1)]">
      <h2 class="mb-4 flex h-7 items-center gap-2 text-[17px] font-bold">
        <svg class="size-[18px] text-[#7c3aed]" viewBox="0 0 512 512" fill="currentColor" aria-hidden="true"><path d="M75 75L41 41C25.900 25.900 0 36.600 0 57.900V168c0 13.300 10.700 24 24 24H134.100c21.400 0 32.100-25.900 17-41l-30.800-30.800C155 85.500 203 64 256 64c106 0 192 86 192 192s-86 192-192 192c-40.800 0-78.600-12.700-109.700-34.400c-14.500-10.100-34.400-6.600-44.600 7.900s-6.600 34.400 7.900 44.600C151.200 495 201.700 512 256 512c141.400 0 256-114.600 256-256S397.400 0 256 0C185.300 0 121.300 28.700 75 75zm181 53c-13.300 0-24 10.700-24 24V256c0 6.400 2.500 12.500 7 17l72 72c9.400 9.400 24.600 9.400 33.900 0s9.400-24.600 0-33.900l-65-65V152c0-13.300-10.700-24-24-24z"/></svg>
        <span>Recent Updates</span>
      </h2>
      <p class="py-6 text-center text-[14px] leading-5 text-[#6b7280]">No updates yet</p>
    </section>

    <section class="rounded-[20px] bg-white p-6 shadow-[0_8px_32px_rgba(0,0,0,0.1)]">
      <h2 class="mb-4 flex h-7 items-center gap-2 text-[17px] font-bold">
        <svg class="size-[18px] text-[#059669]" viewBox="0 0 512 512" fill="currentColor" aria-hidden="true"><circle cx="48" cy="96" r="48"/><circle cx="48" cy="256" r="48"/><circle cx="48" cy="416" r="48"/><rect x="160" y="64" width="352" height="64" rx="32"/><rect x="160" y="224" width="352" height="64" rx="32"/><rect x="160" y="384" width="352" height="64" rx="32"/></svg>
        <span>Route Stops</span>
      </h2>
      <div class="flex h-[300px]">
        <ul class="min-w-0 flex-1 overflow-hidden">
          <li class="flex items-start gap-3 border-b border-l-4 border-b-gray-200 border-l-[#3b82f6] bg-[linear-gradient(90deg,#dbeafe,#e0e7ff)] p-3">
            <span class="flex size-10 items-center justify-center rounded-full bg-[linear-gradient(135deg,#3b82f6,#2563eb)] text-[14px] font-bold text-white shadow-md">1</span>
            <div class="flex-1 pt-0.5"><p class="text-[13px] font-semibold leading-5">Main Stand</p><p class="text-[12px] leading-4 text-[#4b5563]">A</p></div>
            <span class="h-[26px] rounded-full border border-[#93c5fd] bg-[#dbeafe] px-2 text-[12px] font-bold leading-6 text-[#1d4ed8]">NOW</span>
          </li>
          <li class="flex items-start gap-3 border-b border-l-4 border-b-gray-200 border-l-[#f59e0b] bg-[linear-gradient(90deg,#fef3c7,#fde68a)] p-3">
            <span class="flex size-10 items-center justify-center rounded-full bg-[linear-gradient(135deg,#f59e0b,#fef3c7)] text-[14px] font-bold text-white shadow-md">2</span>
            <div class="flex-1 pt-0.5"><p class="text-[13px] font-semibold leading-5">Police Halt</p><p class="text-[12px] leading-4 text-[#4b5563]">B</p></div>
            <span class="h-[26px] rounded-full border border-[#fcd34d] bg-[#fef3c7] px-2 text-[12px] font-bold leading-6 text-[#b45309]">NEXT</span>
          </li>
          <li class="flex items-start gap-3 border-b border-gray-200 p-3">
            <span class="flex size-10 items-center justify-center rounded-full bg-[linear-gradient(135deg,#8b5cf6,#4f46e5)] text-[14px] font-bold text-white shadow-md">3</span>
            <div class="flex-1 pt-0.5"><p class="text-[13px] font-semibold leading-5">Maliyadewa Girls Halt</p><p class="text-[12px] leading-4 text-[#4b5563]">C</p></div>
          </li>
          <li class="flex items-start gap-3 border-b border-gray-200 p-3">
            <span class="flex size-10 items-center justify-center rounded-full bg-[linear-gradient(135deg,#8b5cf6,#4f46e5)] text-[14px] font-bold text-white shadow-md">4</span>
            <div class="flex-1 pt-0.5"><p class="text-[13px] font-semibold leading-5">Bawudalokamawatha Halt</p><p class="text-[12px] leading-4 text-[#4b5563]">D</p></div>
          </li>
          <li class="flex items-start gap-3 border-b border-gray-200 p-3">
            <span class="flex size-10 items-center justify-center rounded-full bg-[linear-gradient(135deg,#8b5cf6,#4f46e5)] text-[14px] font-bold text-white shadow-md">5</span>
            <div class="flex-1 pt-0.5"><p class="text-[13px] font-semibold leading-5">Puwakgashandiya Stop</p><p class="text-[12px] leading-4 text-[#4b5563]">E</p></div>
          </li>
        </ul>
        <div class="flex w-[10px] flex-col items-center justify-between bg-slate-100 py-1" aria-hidden="true">
          <div class="flex flex-col items-center gap-[5px]">
            <svg class="h-[3px] w-[6px]" viewBox="0 0 6 3"><path d="M3 0L6 3H0z" fill="#3b82f6"/></svg>
            <div class="h-[45px] w-[6px] rounded-full bg-[#3b82f6]"></div>
          </div>
          <svg class="h-[3px] w-[6px]" viewBox="0 0 6 3"><path d="M3 3L6 0H0z" fill="#3b82f6"/></svg>
        </div>
      </div>
    </section>
  </div>
</main>
</div>

<script>
  // Stops as [number, x, y]; the southernmost marker is drawn last, on top.
  const stops = [[1,912,1002],[2,904,1046],[3,887,1063],[4,865,1073],[5,798,1044],[6,749,996],[7,722,936],[8,692,925],[9,671,908],[10,649,907],[11,622,899],[12,602,885],[13,578,888],[14,548,878],[15,540,869],[16,530,874],[17,513,871],[18,494,870],[19,474,874],[20,468,878],[21,451,888],[22,443,889],[23,436,893],[24,422,904],[25,427,909],[26,437,916],[27,441,927],[28,448,942]];
  document.getElementById('stops').innerHTML = stops
    .sort((a, b) => a[2] - b[2])
    .map(([n, x, y]) => `<circle cx="${x}" cy="${y}" r="13" fill="#fff" filter="url(#drop)"/><circle cx="${x}" cy="${y}" r="11" fill="${n === 1 ? '#2563eb' : 'url(#gv)'}"/><text x="${x}" y="${y + 4}">${n}</text>`)
    .join('');
</script>
</body>
</html>
